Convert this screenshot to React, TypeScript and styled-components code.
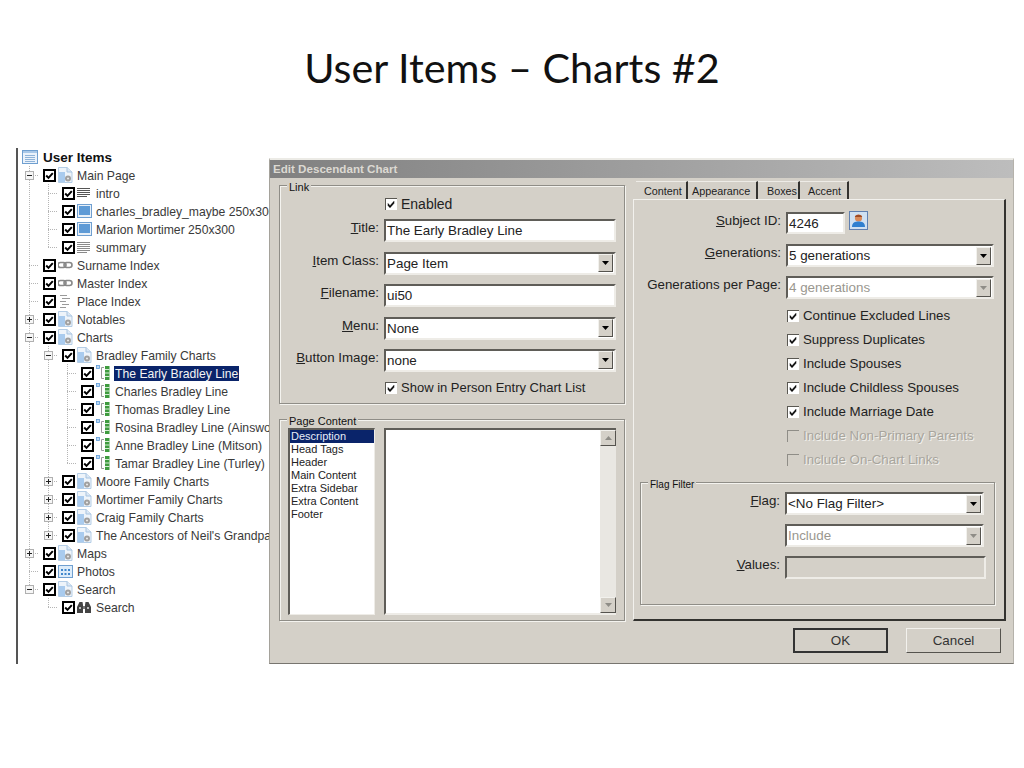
import React from "react";
import styled, { createGlobalStyle } from "styled-components";

const Global = createGlobalStyle`
  html, body { margin: 0; padding: 0; background: #fff; }
  body { font-family: "Liberation Sans", Arial, sans-serif; }
`;

const Page = styled.div`
  width: 1024px;
  height: 768px;
  overflow: hidden;
  background: #fff;
`;
const Heading = styled.h1`
  margin: 0;
  height: 148px;
  padding-top: 43px;
  box-sizing: border-box;
  text-align: center;
  font-family: Lato, "Open Sans", sans-serif;
  font-weight: 400;
  font-size: 41.3px;
  line-height: 48px;
  color: #111;
`;
const Stage = styled.div`
  display: flex;
  padding-left: 16px;
  align-items: flex-start;
`;

/* ---------- tree ---------- */
const TreePanel = styled.div`
  width: 251px;
  height: 516px;
  border-left: 2px solid #555;
  overflow: hidden;
  flex: none;
`;
const Row = styled.div`
  display: flex;
  align-items: center;
  height: 18px;
  padding-left: 2px;
  white-space: nowrap;
  font-size: 12.2px;
  color: #3a3a3a;
`;
const RootRow = styled(Row)`
  padding-left: 4px;
  gap: 5px;
  font-size: 13.5px;
  font-weight: 700;
  color: #111;
`;
const dot = "#b5b5b5";
const vLine = `repeating-linear-gradient(to bottom, ${dot} 0 1px, transparent 1px 2px)`;
const hLine = `repeating-linear-gradient(to right, ${dot} 0 1px, transparent 1px 2px)`;
const Slot = styled.div<{ $kind: string }>`
  width: 19px;
  height: 18px;
  flex: none;
  display: flex;
  align-items: center;
  justify-content: center;
  background-repeat: no-repeat;
  background-image: ${(p) =>
    p.$kind === "pass"
      ? vLine
      : p.$kind === "tee" || p.$kind === "end"
      ? `${vLine}, ${hLine}`
      : "none"};
  background-size: ${(p) =>
    p.$kind === "pass" || p.$kind === "tee"
      ? "1px 18px, 10px 1px"
      : "1px 9px, 10px 1px"};
  background-position: 9px 0, 9px 9px;
`;
const Expander = styled.svg`
  display: block;
  width: 9px;
  height: 9px;
`;
const TreeCheck = styled.svg`
  display: block;
  width: 13px;
  height: 13px;
  flex: none;
  margin-left: 4px;
`;
const TreeIcon = styled.svg`
  display: block;
  width: 16px;
  height: 16px;
  flex: none;
  margin: 0 2px 0 2px;
`;
const RootIcon = styled(TreeIcon)`
  margin: 0;
`;
const TreeLabel = styled.span<{ $sel?: boolean }>`
  padding: 1px 1px 0;
  margin-top: 1px;
  line-height: 14px;
  background: ${(p) => (p.$sel ? "#0a246a" : "transparent")};
  color: ${(p) => (p.$sel ? "#f4f4f4" : "inherit")};
`;

const Exp = ({ open }: { open: boolean }) => (
  <Expander viewBox="0 0 9 9">
    <rect x=".5" y=".5" width="8" height="8" fill="#f6f6f6" stroke="#b0b0b0" />
    <path d={open ? "M2 4.5h5" : "M2 4.5h5M4.5 2v5"} stroke="#222" />
  </Expander>
);
const TCheck = () => (
  <TreeCheck viewBox="0 0 13 13">
    <rect x="1" y="1" width="11" height="11" fill="#fff" stroke="#000" strokeWidth="2" />
    <path d="M3.2 6.5l2.3 2.4 4.3-4.8" fill="none" stroke="#000" strokeWidth="2" />
  </TreeCheck>
);

const icons: Record<string, React.ReactNode> = {
  root: (
    <>
      <rect x=".5" y="1.5" width="15" height="13" fill="#eaf2fb" stroke="#6f9fd0" />
      <rect x="1" y="2" width="14" height="2" fill="#a9c8e8" />
      <path d="M3 6.5h10M3 8.500h10M3 10.500h10M3 12.500h10" stroke="#8fb3d8" />
    </>
  ),
  doc: (
    <>
      <path d="M.5.5h8.500l5 4.500v10.500H.5z" fill="#eef4fa" stroke="#b4cde6" />
      <path d="M1 5h6v10H1z" fill="#a9cbee" />
      <path d="M9 .5v4.500h5" fill="#dce8f5" stroke="#a8c4e0" />
      <circle cx="10" cy="11.500" r="3" fill="#a0a0a0" />
      <circle cx="10" cy="11.500" r="1.100" fill="#e6e6e6" />
    </>
  ),
  lines: <path d="M0 3.500h13M0 5.500h13M0 7.500h13M0 9.500h13M0 11.500h10" stroke="#555" />,
  dense: <path d="M0 3.500h13M0 5.500h13M0 7.500h13M0 9.500h13M0 11.500h13M0 13.500h10" stroke="#8a8a8a" />,
  image: (
    <>
      <rect x=".5" y="1.500" width="14" height="13" fill="#e8f0f8" stroke="#6f9fd0" />
      <rect x="2" y="3" width="11" height="9" fill="#5f9bd6" />
    </>
  ),
  link: (
    <>
      <rect x="0" y="5.500" width="8" height="5" rx="2.500" fill="none" stroke="#888" strokeWidth="1.600" />
      <rect x="6" y="5.500" width="8" height="5" rx="2.500" fill="none" stroke="#888" strokeWidth="1.600" />
    </>
  ),
  place: <path d="M2 2.500h7M4 5.500h8M2 8.500h6M4 11.500h7M2 14.500h6" stroke="#9a9a9a" />,
  chart: (
    <>
      <rect x=".5" y=".5" width="3" height="3" fill="#bcd8f2" stroke="#5d9ad6" strokeWidth=".8" />
      <path d="M8 2.500H5.500v11H8" fill="none" stroke="#999" />
      <path d="M9 1h4.500v14H9z" fill="#3f9b3f" />
      <path d="M9 4.500h4.500M9 8h4.500M9 11.500h4.500" stroke="#d5ecd5" />
    </>
  ),
  photos: (
    <>
      <rect x=".5" y="2.500" width="14" height="12" fill="#dcecfa" stroke="#6f9fd0" />
      <path d="M3 6h2v2H3zM6.500 6h2v2h-2zM10 6h2v2h-2zM3 10h2v2H3zM6.500 10h2v2h-2zM10 10h2v2h-2z" fill="#3f86cc" />
    </>
  ),
  binoculars: (
    <>
      <path d="M1 6l1.500-3h3L6 6v8H0V8zM13 6l-1.500-3h-3L8 6v8h6V8z" fill="#444" />
      <path d="M6 7h2v3H6z" fill="#777" />
      <path d="M2 8h2v2H2zM10 8h2v2h-2z" fill="#bbb" />
    </>
  ),
};

type TreeItem = { s: string[]; x?: "open" | "shut"; i: string; t: string; sel?: boolean };
const chart = (t: string, k = "tee", sel = false): TreeItem => ({ s: ["pass", "pass", k], i: "chart", t, sel });
const treeItems: TreeItem[] = [
  { s: ["tee"], x: "open", i: "doc", t: "Main Page" },
  { s: ["pass", "tee"], i: "lines", t: "intro" },
  { s: ["pass", "tee"], i: "image", t: "charles_bradley_maybe 250x300" },
  { s: ["pass", "tee"], i: "image", t: "Marion Mortimer 250x300" },
  { s: ["pass", "end"], i: "dense", t: "summary" },
  { s: ["tee"], i: "link", t: "Surname Index" },
  { s: ["tee"], i: "link", t: "Master Index" },
  { s: ["tee"], i: "place", t: "Place Index" },
  { s: ["tee"], x: "shut", i: "doc", t: "Notables" },
  { s: ["tee"], x: "open", i: "doc", t: "Charts" },
  { s: ["pass", "tee"], x: "open", i: "doc", t: "Bradley Family Charts" },
  chart("The Early Bradley Line", "tee", true),
  chart("Charles Bradley Line"),
  chart("Thomas Bradley Line"),
  chart("Rosina Bradley Line (Ainsworth)"),
  chart("Anne Bradley Line (Mitson)"),
  chart("Tamar Bradley Line (Turley)", "end"),
  { s: ["pass", "tee"], x: "shut", i: "doc", t: "Moore Family Charts" },
  { s: ["pass", "tee"], x: "shut", i: "doc", t: "Mortimer Family Charts" },
  { s: ["pass", "tee"], x: "shut", i: "doc", t: "Craig Family Charts" },
  { s: ["pass", "end"], x: "shut", i: "doc", t: "The Ancestors of Neil's Grandparents" },
  { s: ["tee"], x: "shut", i: "doc", t: "Maps" },
  { s: ["tee"], i: "photos", t: "Photos" },
  { s: ["end"], x: "open", i: "doc", t: "Search" },
  { s: ["none", "end"], i: "binoculars", t: "Search" },
];

/* ---------- dialog ---------- */
const Dialog = styled.div`
  margin-top: 10px;
  width: 745px;
  height: 506px;
  box-sizing: border-box;
  flex: none;
  background: #d4d0c8;
  border-top: 2px solid #ecebe6;
  border-left: 1px solid #a5a29b;
  border-bottom: 1px solid #77756f;
  border-right: 1px solid #b5b2ab;
  display: flex;
  flex-direction: column;
`;
const TitleBar = styled.div`
  height: 18px;
  flex: none;
  padding-left: 3px;
  background: linear-gradient(to right, #808080, #bdbdbd);
  color: #dcd9d2;
  font-size: 11.6px;
  font-weight: 700;
  line-height: 18px;
`;
const Body = styled.div`
  display: flex;
  gap: 8px;
  padding: 7px 0 0 9px;
  height: 436px;
  flex: none;
`;
const LeftCol = styled.div`
  width: 346px;
  flex: none;
  display: flex;
  flex-direction: column;
  gap: 15px;
`;
const Group = styled.div<{ $h: number }>`
  position: relative;
  box-sizing: border-box;
  height: ${(p) => p.$h}px;
  border: 1px solid #8f8d87;
  box-shadow: inset 1px 1px 0 #f4f3ef, 1px 1px 0 #f4f3ef;
`;
const FlagGroup = styled(Group)`
  margin: 16px 0 0 6px;
  width: 355px;
`;
const Legend = styled.span<{ $size?: number }>`
  position: absolute;
  left: 7px;
  top: -5px;
  padding: 0 2px;
  background: #d4d0c8;
  font-size: ${(p) => p.$size ?? 11}px;
  line-height: 13px;
  color: #111;
`;
const LinkGrid = styled.div`
  display: grid;
  grid-template-columns: 94px 232px;
  column-gap: 5px;
  row-gap: 9.4px;
  align-items: center;
  padding-top: 11px;
  margin-left: 5px;
`;
const FieldLabel = styled.label`
  grid-column: 1;
  align-self: start;
  text-align: right;
  white-space: nowrap;
  font-size: 13.3px;
  line-height: 17px;
  color: #222;
`;
const CheckRow = styled.div<{ $off?: boolean; $size?: number }>`
  grid-column: 2;
  display: flex;
  align-items: center;
  gap: 4.5px;
  height: 13px;
  padding-left: 0.5px;
  font-size: ${(p) => p.$size ?? 13.3}px;
  white-space: nowrap;
  color: ${(p) => (p.$off ? "#a8a59d" : "#222")};
  text-shadow: ${(p) => (p.$off ? "1px 1px 0 #f2f1ed" : "none")};
`;
const CheckBox = styled.svg`
  width: 12px;
  height: 12px;
  display: block;
  flex: none;
`;
const Check = ({ off }: { off?: boolean }) => (
  <CheckBox viewBox="0 0 12 12">
    <rect width="12" height="12" fill={off ? "#d4d0c8" : "#fff"} />
    <path d="M0 12V0h12" fill="none" stroke={off ? "#8f8d87" : "#5a5852"} strokeWidth="2" />
    {!off && <path d="M3 5.500l2 2.200 4-4.400v2l-4 4.400-2-2.200z" fill="#000" stroke="#000" strokeWidth=".5" />}
  </CheckBox>
);
const sunken = `
  box-sizing: border-box;
  border-style: solid;
  border-width: 2px;
  border-color: #5f5d58 #eeece7 #eeece7 #5f5d58;
`;
const Input = styled.div<{ $w?: number; $h?: number; $off?: boolean }>`
  ${sunken}
  grid-column: 2;
  width: ${(p) => (p.$w ? `${p.$w}px` : "100%")};
  height: ${(p) => p.$h ?? 23}px;
  padding-left: 1px;
  background: ${(p) => (p.$off ? "#d4d0c8" : "#fff")};
  font-size: 13.4px;
  line-height: 19px;
  color: #222;
`;
const SelectBox = styled.div<{ $w?: number; $off?: boolean }>`
  ${sunken}
  grid-column: 2;
  width: ${(p) => (p.$w ? `${p.$w}px` : "100%")};
  height: 23px;
  display: flex;
  align-items: center;
  justify-content: space-between;
  padding-left: 1px;
  background: #fff;
  font-size: 13.4px;
  color: ${(p) => (p.$off ? "#9a978f" : "#222")};
`;
const raised = `
  box-sizing: border-box;
  background: #d4d0c8;
  border-style: solid;
  border-width: 1px;
  border-color: #f2f1ed #55534e #55534e #f2f1ed;
`;
const DropBtn = styled.div`
  ${raised}
  width: 15px;
  height: 18px;
  margin-right: 1px;
  display: flex;
  align-items: center;
  justify-content: center;
`;
const Arrow = styled.svg`
  width: 7px;
  height: 4px;
  display: block;
`;
const Select = ({ v, w, off }: { v: string; w?: number; off?: boolean }) => (
  <SelectBox $w={w} $off={off}>
    {v}
    <DropBtn>
      <Arrow viewBox="0 0 7 4">
        <path d="M0 0h7L3.500 4z" fill={off ? "#8f8d87" : "#000"} />
      </Arrow>
    </DropBtn>
  </SelectBox>
);
const ContentRow = styled.div`
  display: flex;
  gap: 9px;
  padding: 8px 0 0 8px;
`;
const ListBox = styled.div`
  box-sizing: border-box;
  width: 87px;
  height: 187px;
  background: #fff;
  border-style: solid;
  border-width: 2px 1px 1px 2px;
  border-color: #5f5d58 #eeece7 #eeece7 #5f5d58;
  font-size: 11px;
  line-height: 13px;
  color: #222;
`;
const ListItem = styled.div<{ $sel?: boolean }>`
  padding-left: 1px;
  background: ${(p) => (p.$sel ? "#0a246a" : "transparent")};
  color: ${(p) => (p.$sel ? "#e8ecf6" : "inherit")};
`;
const Memo = styled.div`
  ${sunken}
  border-right-width: 0;
  width: 232px;
  height: 187px;
  background: #fff;
  display: flex;
  justify-content: flex-end;
`;
const ScrollBar = styled.div`
  width: 16px;
  background: #e9e7e2;
  display: flex;
  flex-direction: column;
  justify-content: space-between;
`;
const ScrollBtn = styled.div`
  ${raised}
  height: 16px;
  display: flex;
  align-items: center;
  justify-content: center;
`;
const ScrollArrow = ({ up }: { up?: boolean }) => (
  <ScrollBtn>
    <Arrow viewBox="0 0 7 4">
      <path d={up ? "M0 4h7L3.500 0z" : "M0 0h7L3.500 4z"} fill="#8f8d87" />
    </Arrow>
  </ScrollBtn>
);

const RightCol = styled.div`
  width: 373px;
  flex: none;
  margin-top: -4px;
`;
const Tabs = styled.div`
  display: flex;
  height: 18px;
  padding-left: 3px;
`;
const Tab = styled.div<{ $w: number; $pad: number }>`
  box-sizing: border-box;
  width: ${(p) => p.$w}px;
  padding-left: ${(p) => p.$pad}px;
  border-right: 2px solid #33322f;
  border-top: 1px solid #eeece7;
  font-size: 10.8px;
  line-height: 18px;
  color: #222;
  white-space: nowrap;
`;
const TabPanel = styled.div`
  box-sizing: border-box;
  height: 422px;
  border-top: 1px solid #f2f1ed;
  border-left: 1px solid #f2f1ed;
  border-right: 2px solid #33322f;
  border-bottom: 2px solid #33322f;
  padding-top: 12px;
`;
const ContentGrid = styled.div`
  display: grid;
  grid-template-columns: 147px 208px;
  column-gap: 5px;
  align-items: center;
`;
const SubjectRow = styled.div`
  grid-column: 2;
  display: flex;
  align-items: flex-start;
  gap: 4px;
  height: 22px;
  margin-bottom: 10px;
`;
const PersonBtn = styled.svg`
  width: 19px;
  height: 19px;
  display: block;
  margin-top: -1px;
`;
const Spaced = styled.div<{ $b: number }>`
  grid-column: 2;
  margin-bottom: ${(p) => p.$b}px;
`;
const Checks = styled.div`
  grid-column: 2;
  display: flex;
  flex-direction: column;
  gap: 11px;
  margin-top: -1px;
`;
const FlagGrid = styled.div`
  display: grid;
  grid-template-columns: 139px 201px;
  column-gap: 5px;
  row-gap: 9px;
  align-items: center;
  padding-top: 9px;
`;
const Footer = styled.div`
  display: flex;
  justify-content: flex-end;
  gap: 18px;
  padding: 7px 12px 0 0;
`;
const Button = styled.div<{ $def?: boolean }>`
  box-sizing: border-box;
  width: 95px;
  height: 25px;
  text-align: center;
  font-size: 13.4px;
  line-height: ${(p) => (p.$def ? "21px" : "23px")};
  color: #333;
  background: #d4d0c8;
  border: ${(p) => (p.$def ? "2px solid #222" : "1px solid")};
  border-color: ${(p) => (p.$def ? "#333" : "#f2f1ed #55534e #55534e #f2f1ed")};
`;

const pageItems = ["Description", "Head Tags", "Header", "Main Content", "Extra Sidebar", "Extra Content", "Footer"];
const options: [string, boolean][] = [
  ["Continue Excluded Lines", false],
  ["Suppress Duplicates", false],
  ["Include Spouses", false],
  ["Include Childless Spouses", false],
  ["Include Marriage Date", false],
  ["Include Non-Primary Parents", true],
  ["Include On-Chart Links", true],
];

export default function App() {
  return (
    <Page>
      <Global />
      <Heading>User Items – Charts #2</Heading>
      <Stage>
        <TreePanel>
          <RootRow>
            <RootIcon viewBox="0 0 16 16">{icons.root}</RootIcon>
            <span>User Items</span>
          </RootRow>
          {treeItems.map((it, i) => (
            <Row key={i}>
              {it.s.map((k, j) => (
                <Slot key={j} $kind={k}>
                  {it.x && j === it.s.length - 1 && <Exp open={it.x === "open"} />}
                </Slot>
              ))}
              <TCheck />
              <TreeIcon viewBox="0 0 16 16">{icons[it.i]}</TreeIcon>
              <TreeLabel $sel={it.sel}>{it.t}</TreeLabel>
            </Row>
          ))}
        </TreePanel>
        <Dialog>
          <TitleBar>Edit Descendant Chart</TitleBar>
          <Body>
            <LeftCol>
              <Group $h={219}>
                <Legend>Link</Legend>
                <LinkGrid>
                  <CheckRow $size={14}><Check />Enabled</CheckRow>
                  <FieldLabel><u>T</u>itle:</FieldLabel>
                  <Input>The Early Bradley Line</Input>
                  <FieldLabel><u>I</u>tem Class:</FieldLabel>
                  <Select v="Page Item" />
                  <FieldLabel><u>F</u>ilename:</FieldLabel>
                  <Input>ui50</Input>
                  <FieldLabel><u>M</u>enu:</FieldLabel>
                  <Select v="None" />
                  <FieldLabel><u>B</u>utton Image:</FieldLabel>
                  <Select v="none" />
                  <CheckRow $size={13}><Check />Show in Person Entry Chart List</CheckRow>
                </LinkGrid>
              </Group>
              <Group $h={202}>
                <Legend>Page Content</Legend>
                <ContentRow>
                  <ListBox>
                    {pageItems.map((p, i) => (
                      <ListItem key={p} $sel={i === 0}>{p}</ListItem>
                    ))}
                  </ListBox>
                  <Memo>
                    <ScrollBar>
                      <ScrollArrow up />
                      <ScrollArrow />
                    </ScrollBar>
                  </Memo>
                </ContentRow>
              </Group>
            </LeftCol>
            <RightCol>
              <Tabs>
                <Tab $w={52} $pad={8}>Content</Tab>
                <Tab $w={70} $pad={4}>Appearance</Tab>
                <Tab $w={42} $pad={9}>Boxes</Tab>
                <Tab $w={49} $pad={8}>Accent</Tab>
              </Tabs>
              <TabPanel>
                <ContentGrid>
                  <FieldLabel><u>S</u>ubject ID:</FieldLabel>
                  <SubjectRow>
                    <Input $w={59} $h={22}>4246</Input>
                    <PersonBtn viewBox="0 0 19 19">
                      <rect x=".5" y=".5" width="18" height="18" fill="#cfe0f2" stroke="#5f7fb0" />
                      <circle cx="9.500" cy="7" r="3.600" fill="#d98a5a" />
                      <path d="M5.800 6c.5-3 6.900-3 7.400 0z" fill="#9c4a26" />
                      <path d="M3 16c0-4.500 3-5.500 6.500-5.500S16 11.500 16 16z" fill="#2f7fd0" />
                    </PersonBtn>
                  </SubjectRow>
                  <FieldLabel><u>G</u>enerations:</FieldLabel>
                  <Spaced $b={9}><Select v="5 generations" /></Spaced>
                  <FieldLabel>Generations per Page:</FieldLabel>
                  <Spaced $b={11}><Select v="4 generations" off /></Spaced>
                  <Checks>
                    {options.map(([t, off]) => (
                      <CheckRow key={t} $off={off}><Check off={off} />{t}</CheckRow>
                    ))}
                  </Checks>
                </ContentGrid>
                <FlagGroup $h={123}>
                  <Legend $size={10}>Flag Filter</Legend>
                  <FlagGrid>
                    <FieldLabel><u>F</u>lag:</FieldLabel>
                    <Select v="<No Flag Filter>" w={199} />
                    <Select v="Include" w={199} off />
                    <FieldLabel><u>V</u>alues:</FieldLabel>
                    <Input $off />
                  </FlagGrid>
                </FlagGroup>
              </TabPanel>
            </RightCol>
          </Body>
          <Footer>
            <Button $def>OK</Button>
            <Button>Cancel</Button>
          </Footer>
        </Dialog>
      </Stage>
    </Page>
  );
}
